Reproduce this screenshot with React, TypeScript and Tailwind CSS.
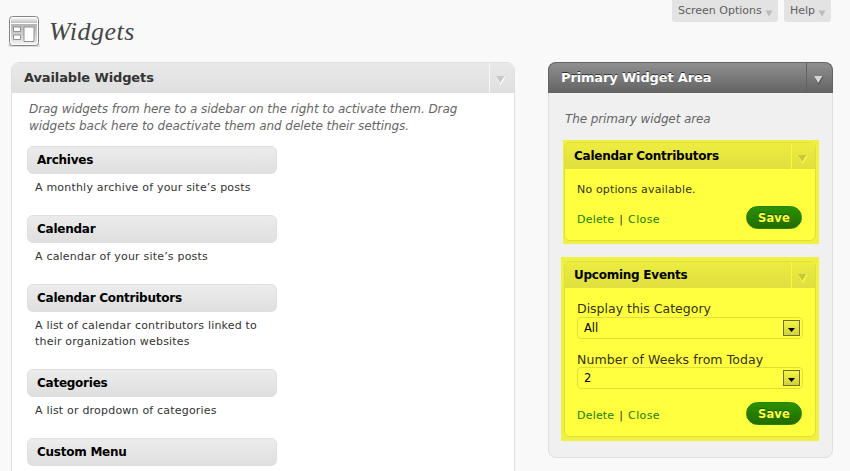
import type { ReactNode } from 'react';

const available = [
  { name: 'Archives', lines: ['A monthly archive of your site’s posts'] },
  { name: 'Calendar', lines: ['A calendar of your site’s posts'] },
  { name: 'Calendar Contributors', lines: ['A list of calendar contributors linked to', 'their organization websites'] },
  { name: 'Categories', lines: ['A list or dropdown of categories'] },
  { name: 'Custom Menu', lines: [] },
];

function Arrow({ fill, shade, className = '' }: { fill: string; shade?: string; className?: string }) {
  return (
    <svg width="11" height="10" viewBox="0 0 11 10" className={className}>
      {shade && <path d="M1 1.500h9.500L5.750 10z" fill={shade} />}
      <path d="M1 1h8.500L5.250 8z" fill={fill} />
    </svg>
  );
}

function ScreenIcon() {
  return (
    <svg width="32" height="32" viewBox="0 0 32 32" className="mt-[15px] ml-2">
      <defs>
        <linearGradient id="bar" x1="0" y1="0" x2="0" y2="1">
          <stop offset="0" stopColor="#f4f4f4" />
          <stop offset="1" stopColor="#bdbdbd" />
        </linearGradient>
        <linearGradient id="field" x1="0" y1="0" x2="0" y2="1">
          <stop offset="0" stopColor="#b4b4b4" />
          <stop offset="0.6" stopColor="#d2d2d2" />
          <stop offset="1" stopColor="#f2f2f2" />
        </linearGradient>
      </defs>
      <rect x="0" y="29" width="32" height="3" rx="1.5" fill="#dcdcdc" />
      <rect x="1.5" y="1.5" width="29" height="29" rx="3" fill="#fff" stroke="#858585" />
      <rect x="3" y="3" width="26" height="5" fill="url(#bar)" />
      <rect x="3" y="9" width="26" height="20" fill="url(#field)" />
      <path d="M5.500 12h7v4.500h-7zM5.500 20h7v4.500h-7zM16 12h10v14.500H16z" fill="#fff" stroke="#919191" />
    </svg>
  );
}

function TopTab({ children, className }: { children: ReactNode; className: string }) {
  return (
    <div className={'flex h-[22px] items-center justify-between rounded-b-[3px] bg-[#e3e3e3] pr-[5px] pl-1.5 text-[11px] text-[#606060] ' + className}>
      <span className="mt-px">{children}</span>
      <svg width="8" height="7" viewBox="0 0 8 7" className="mt-1">
        <path d="M0.500 0.500h7L4 6.500z" fill="#bbb" />
      </svg>
    </div>
  );
}

function Save() {
  return (
    <button className="h-[23px] w-14 rounded-full border border-[#248000] bg-linear-to-b from-[#2a9200] to-[#226b00] pt-0.5 text-[11.500px] leading-[19px] font-bold tracking-[0.2px] text-[#ffff40] [text-shadow:0_-1px_0_#1c5800]">
      Save
    </button>
  );
}

function Actions({ className }: { className: string }) {
  return (
    <div className={'flex items-start justify-between pr-[13px] text-[11px] ' + className}>
      <div className="mt-[5px] leading-[17px] text-[#333310]">
        <a className="tracking-[0.2px] text-[#218000]">Delete</a>
        <span className="px-[5px]">|</span>
        <a className="tracking-[0.400px] text-[#218000]">Close</a>
      </div>
      <Save />
    </div>
  );
}

function ActiveWidget({ title, className, children }: { title: string; className: string; children: ReactNode }) {
  return (
    <div className={'flex flex-col rounded-md border border-[#dfdf3c] bg-[#ffff40] ' + className}>
      <div className="flex h-[26px] shrink-0 rounded-t-[5px] bg-linear-to-b from-[#ecec40] to-[#dfdf40]">
        <h4 className="grow pl-[9px] text-[12px] leading-[27px] font-bold tracking-[-0.25px] text-black">{title}</h4>
        <div className="flex w-6 border-l border-[#f8f840] pt-[11px] pl-[5px]">
          <Arrow fill="#c8c840" shade="#ffff40" />
        </div>
      </div>
      <div className="flex flex-col pl-3">{children}</div>
    </div>
  );
}

function Select({ value }: { value: string }) {
  return (
    <div className="flex h-[22px] w-[226px] items-center justify-between rounded border border-[#dfdf3c] pr-0.5 pl-1.5 text-[11.500px] text-black">
      <span className="mt-px">{value}</span>
      <span className="flex h-4 w-[17px] items-center justify-center border border-[#707028] bg-linear-to-b from-[#f5f540] to-[#d0d040]">
        <svg width="7" height="4" viewBox="0 0 7 4" className="mt-1"><path d="M0 0h7L3.500 4z" fill="#000" /></svg>
      </span>
    </div>
  );
}

export default function App() {
  return (
    <div className="h-[471px] w-[850px] overflow-hidden bg-[#f9f9f9] font-['DejaVu_Sans',sans-serif]">
      <header className="flex h-[62px] items-start">
        <ScreenIcon />
        <h1 className="mt-[15px] ml-[9px] grow font-['Liberation_Serif',serif] text-[26px] leading-[34px] tracking-[0.500px] text-[#464646] italic">Widgets</h1>
        <div className="flex gap-1.5 pr-[19px]">
          <TopTab className="w-[106px]">Screen Options</TopTab>
          <TopTab className="w-[47px]">Help</TopTab>
        </div>
      </header>
      <main className="flex items-start gap-[33px] pl-[11px]">
        <section className="h-[420px] w-[504px] rounded-t-lg border border-[#dfdfdf] bg-white">
          <div className="flex h-[30px] rounded-t-[7px] bg-linear-to-b from-[#e9e9e9] to-[#dfdfdf]">
            <h3 className="grow pl-3 text-[13px] leading-[29px] font-bold tracking-[-0.120px] text-[#333]">Available Widgets</h3>
            <div className="flex w-[25px] border-l border-[#f8f8f8] pt-3 pl-[5px]">
              <Arrow fill="#c8c8c8" shade="#fff" />
            </div>
          </div>
          <p className="mt-2 ml-[17px] h-[45px] text-[12px] leading-[17px] tracking-[-0.060px] whitespace-nowrap text-[#666] italic">
            Drag widgets from here to a sidebar on the right to activate them. Drag<br />
            widgets back here to deactivate them and delete their settings.
          </p>
          <div className="ml-[15px] flex w-[250px] flex-col">
            {available.map((w) => (
              <div key={w.name} className="pb-[19px]">
                <h4 className="h-7 rounded-md border border-[#dfdfdf] bg-linear-to-b from-[#ececec] to-[#dfdfdf] pl-[9px] text-[12px] leading-[26px] font-bold tracking-[-0.250px] text-black">{w.name}</h4>
                <div className="pt-1.5 pl-2 text-[11px] leading-4 tracking-[0.200px] whitespace-nowrap text-[#333]">
                  {w.lines.map((l) => <p key={l}>{l}</p>)}
                </div>
              </div>
            ))}
          </div>
        </section>
        <section className="flex h-[396px] w-[285px] flex-col rounded-lg border border-[#dfdfdf] bg-[#f0f0f0]">
          <div className="-mx-px -mt-px flex h-[31px] shrink-0 rounded-t-lg border border-b-0 border-[#636363] bg-linear-to-b from-[#909090] to-[#636363]">
            <h3 className="grow pl-3 text-[13px] leading-[29px] font-bold tracking-[-0.150px] text-white [text-shadow:0_-1px_0_#333]">Primary Widget Area</h3>
            <div className="flex w-[26px] border-l border-[#606060] pt-3 pl-1.5">
              <Arrow fill="#d5d5d5" shade="#555" />
            </div>
          </div>
          <p className="ml-4 h-[47px] pt-[18px] text-[12px] leading-[17px] tracking-[-0.120px] text-[#666] italic">The primary widget area</p>
          <div className="ml-[14px] h-[104px] w-64 bg-[#f0f040] pt-0.5 pl-px">
            <ActiveWidget title="Calendar Contributors" className="h-[99px] w-[252px]">
              <p className="mt-[13px] text-[11px] leading-4 tracking-[0.150px] text-[#333310]">No options available.</p>
              <Actions className="mt-2" />
            </ActiveWidget>
          </div>
          <div className="mt-[13px] ml-3 h-[184px] w-[258px] bg-[#f0f040] pt-1 pl-[3px]">
            <ActiveWidget title="Upcoming Events" className="h-[176px] w-[252px]">
              <label className="mt-3 text-[12.500px] leading-[17px] text-[#333310]">Display this Category</label>
              <Select value="All" />
              <label className="mt-[13px] text-[12.500px] leading-[15px] tracking-[0.080px] text-[#333310]">Number of Weeks from Today</label>
              <Select value="2" />
              <Actions className="mt-[13px]" />
            </ActiveWidget>
          </div>
        </section>
      </main>
    </div>
  );
}
